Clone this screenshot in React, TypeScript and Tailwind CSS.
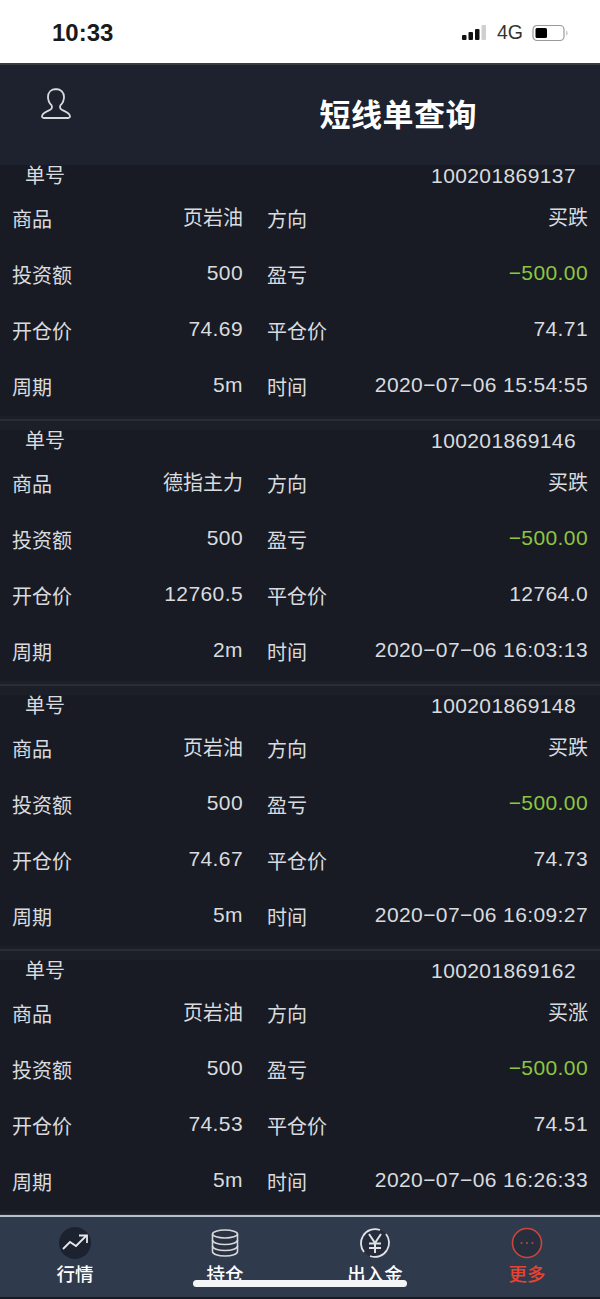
const font = '[font-family:"Liberation_Sans","Noto_Sans_CJK_SC",sans-serif]'

const orders = [
  { no: '100201869137', name: '页岩油', dir: '买跌', amount: '500', pnl: '−500.00', open: '74.69', close: '74.71', period: '5m', time: '2020−07−06 15:54:55' },
  { no: '100201869146', name: '德指主力', dir: '买跌', amount: '500', pnl: '−500.00', open: '12760.5', close: '12764.0', period: '2m', time: '2020−07−06 16:03:13' },
  { no: '100201869148', name: '页岩油', dir: '买跌', amount: '500', pnl: '−500.00', open: '74.67', close: '74.73', period: '5m', time: '2020−07−06 16:09:27' },
  { no: '100201869162', name: '页岩油', dir: '买涨', amount: '500', pnl: '−500.00', open: '74.53', close: '74.51', period: '5m', time: '2020−07−06 16:26:33' },
]

const num = 'pb-[7px] text-[21px] tracking-[0.4px]'

function Row({ a, b, c, d, green, cjk }: { a: string; b: string; c: string; d: string; green?: boolean; cjk?: boolean }) {
  return (
    <div className="flex h-14 items-center px-3 text-[20px] text-[#d9dbdf]">
      <div className="flex w-[231px] items-center justify-between">
        <span>{a}</span>
        <span className={cjk ? 'pb-[5px]' : num}>{b}</span>
      </div>
      <div className="ml-6 flex w-[321px] items-center justify-between">
        <span>{c}</span>
        <span className={`${cjk ? 'pb-[5px]' : num} ${green ? 'text-[#8dc63f]' : ''}`}>{d}</span>
      </div>
    </div>
  )
}

function Card({ o }: { o: (typeof orders)[number] }) {
  return (
    <div>
      <div className="flex h-[27px] items-center justify-between pl-[25px] pr-6 pb-[5px] text-[20px] text-[#d9dbdf]">
        <span>单号</span>
        <span className="text-[21px] tracking-[0.4px]">{o.no}</span>
      </div>
      <Row a="商品" b={o.name} c="方向" d={o.dir} cjk />
      <Row a="投资额" b={o.amount} c="盈亏" d={o.pnl} green />
      <Row a="开仓价" b={o.open} c="平仓价" d={o.close} />
      <Row a="周期" b={o.period} c="时间" d={o.time} />
      <div className="h-[14px] bg-[#1c1f28] pt-[3px]">
        <div className="h-[2px] w-full bg-[#2a2d36]" />
      </div>
    </div>
  )
}

function Tab({ label, active, children }: { label: string; active?: boolean; children: React.ReactNode }) {
  return (
    <div className={`flex flex-col items-center pt-[10px] text-[18.5px] font-medium leading-[24px] ${active ? 'pl-1 text-[#e8432f]' : 'text-white'}`}>
      <div className="flex h-[32px] w-[32px] items-center justify-center">{children}</div>
      <span className="mt-[4px]">{label}</span>
    </div>
  )
}

export default function App() {
  return (
    <div className={`relative flex h-[1299px] w-[600px] flex-col overflow-hidden bg-[#181b24] ${font}`}>
      {/* status bar */}
      <div className="flex h-[65px] shrink-0 items-center justify-between border-b-2 border-[#3a3c42] bg-white pl-[52px] pr-[31px] pt-[2px]">
        <span className="text-[24px] font-bold text-[#1a1a1a]">10:33</span>
        <div className="flex items-center">
          <svg width="25" height="18" viewBox="0 0 25 18">
            <rect x="0" y="11" width="4.500" height="5" rx="1" fill="#111" />
            <rect x="6.500" y="8" width="4.500" height="8" rx="1" fill="#111" />
            <rect x="13" y="5" width="4.500" height="11" rx="1" fill="#111" />
            <rect x="19.500" y="1" width="4.500" height="15" rx="1" fill="#cfcfcf" />
          </svg>
          <span className="ml-[10px] text-[19.5px] text-[#333]">4G</span>
          <svg className="ml-[9px]" width="37" height="18" viewBox="0 0 37 18">
            <rect x="1" y="1.500" width="31" height="15" rx="4" fill="none" stroke="#9a9a9a" strokeWidth="1.200" />
            <rect x="3.500" y="4" width="11.500" height="10" rx="1.500" fill="#000" />
            <path d="M34.500 6.500c1.200.6 1.200 4.400 0 5z" fill="#999" />
          </svg>
        </div>
      </div>

      {/* header */}
      <div className="relative flex h-[100px] shrink-0 items-center justify-end bg-[#1e212e] pr-[123px] pt-[3px]">
        <svg className="absolute left-[40px] top-[22px]" width="32" height="34" viewBox="0 0 32 34" fill="none" stroke="#d8dade" strokeWidth="1.800">
          <path d="M16 2c-5 0-8 3.400-8 8 0 3.600 1.600 6.400 3.400 8.200.9 1 .7 3.200-.6 4.200-2 1.600-7.400 2.600-8.600 6.100-.5 1.500.2 2.500 1.800 2.500h24c1.600 0 2.300-1 1.800-2.500-1.200-3.500-6.600-4.500-8.600-6.100-1.300-1-1.500-3.200-.6-4.200 1.800-1.800 3.400-4.600 3.400-8.200 0-4.600-3-8-8-8z" />
        </svg>
        <span className="text-[31px] font-bold tracking-[0.5px] text-white">短线单查询</span>
      </div>

      {/* orders */}
      <div className="min-h-0 flex-1 overflow-hidden">
        {orders.map((o) => (
          <Card key={o.no} o={o} />
        ))}
      </div>

      {/* tab bar */}
      <div className="h-[84px] shrink-0">
        <div className="grid h-[82px] grid-cols-4 border-t-2 border-[#b9c0cd] bg-[#303a4d]">
          <Tab label="行情">
            <div className="flex h-[32px] w-[32px] items-center justify-center rounded-full bg-[#1c2230]">
              <svg width="28" height="20" viewBox="0 0 28 20" fill="none" stroke="#e6e8ec" strokeWidth="1.800">
                <path d="M2 16l7-7 6 4 10-10" />
                <path d="M18 2.500h8V10" />
              </svg>
            </div>
          </Tab>
          <Tab label="持仓">
            <svg width="28" height="28" viewBox="0 0 28 28" fill="#2a3242" stroke="#d6d8dc" strokeWidth="1.600">
              <path d="M1.500 5v17.500c0 2.500 5.600 4.500 12.500 4.500s12.500-2 12.500-4.500V5" />
              <ellipse cx="14" cy="5" rx="12.500" ry="4" />
              <path d="M1.500 11c0 2.500 5.600 4.500 12.500 4.500s12.500-2 12.500-4.500" fill="none" />
              <path d="M1.500 17c0 2.500 5.600 4.500 12.500 4.500s12.500-2 12.500-4.500" fill="none" />
            </svg>
          </Tab>
          <Tab label="出入金">
            <svg width="32" height="32" viewBox="0 0 32 32" fill="none" stroke="#e0e2e6" strokeWidth="1.800">
              <circle cx="16" cy="16" r="14" fill="#252c3b" stroke="none" />
              <path d="M4 9a14 14 0 0 1 17-6" />
              <path d="M27 7a14 14 0 0 1 1 16" />
              <path d="M28 23a14 14 0 0 1-17 6" />
              <path d="M5 25a14 14 0 0 1-1-16" />
              <path d="M10 7l6 9 6-9M16 16v10M10 16.500h12M10 21h12" strokeWidth="2" />
            </svg>
          </Tab>
          <Tab label="更多" active>
            <svg width="32" height="32" viewBox="0 0 32 32" fill="none">
              <circle cx="16" cy="16" r="14.500" fill="#272e3d" stroke="#c9473a" strokeWidth="1.600" />
              <circle cx="10.500" cy="16" r="1.100" fill="#b5453c" />
              <circle cx="16" cy="16" r="1.100" fill="#b5453c" />
              <circle cx="21.500" cy="16" r="1.100" fill="#b5453c" />
            </svg>
          </Tab>
        </div>
      </div>

      {/* home indicator */}
      <div className="absolute bottom-[12px] left-[193px] h-[7px] w-[214px] rounded-full bg-[#f4f5f7]" />
    </div>
  )
}
